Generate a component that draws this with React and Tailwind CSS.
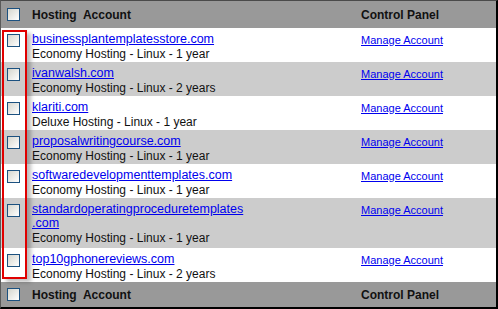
import React from 'react'

const accounts = [
  { domain: 'businessplantemplatesstore.com', plan: 'Economy Hosting - Linux - 1 year' },
  { domain: 'ivanwalsh.com', plan: 'Economy Hosting - Linux - 2 years' },
  { domain: 'klariti.com', plan: 'Deluxe Hosting - Linux - 1 year' },
  { domain: 'proposalwritingcourse.com', plan: 'Economy Hosting - Linux - 1 year' },
  { domain: 'softwaredevelopmenttemplates.com', plan: 'Economy Hosting - Linux - 1 year' },
  { domain: 'standardoperatingproceduretemplates', tail: '.com', plan: 'Economy Hosting - Linux - 1 year' },
  { domain: 'top10gphonereviews.com', plan: 'Economy Hosting - Linux - 2 years' },
]

function Box() {
  return (
    <span className="block w-[13px] h-[13px] border border-[#1c5180] bg-gradient-to-br from-[#d6d6ce] to-white" />
  )
}

function HeadRow({ height }) {
  return (
    <div className={`flex items-center bg-[#999999] ${height}`}>
      <div className="w-[31px] pl-[6px]">
        <Box />
      </div>
      <div className="w-[329px] font-bold text-[12px] text-[#111]">Hosting&nbsp; Account</div>
      <div className="font-bold text-[12px] text-[#111]">Control Panel</div>
    </div>
  )
}

export default function App() {
  return (
    <div
      className="relative w-[498px] h-[309px] bg-white border-t border-l border-t-[#4a4a4a] border-l-[#5a5a5a] border-r-2 border-b-2 border-r-black border-b-black"
      style={{ fontFamily: '"Liberation Sans", Arial, sans-serif' }}
    >
      <HeadRow height="h-[27px]" />

      {accounts.map((a, i) => (
        <div
          key={a.domain}
          className={`flex ${i % 2 ? 'bg-[#cccccc]' : 'bg-white'} ${a.tail ? 'h-[50px]' : 'h-[34px]'}`}
        >
          <div className="w-[31px] pl-[6px] pt-[6px]">
            <Box />
          </div>
          <div className="w-[329px] pt-[4px] leading-[14px]">
            <a href="#" className="block text-[12.5px] text-[#0000ee] underline">
              {a.domain}
              {a.tail && <><br />{a.tail}</>}
            </a>
            <div className="text-[12px] text-[#111] mt-[1px]">{a.plan}</div>
          </div>
          <div className="pt-[4px] leading-[14px]">
            <a href="#" className="text-[11px] text-[#0000ee] underline">Manage Account</a>
          </div>
        </div>
      ))}

      <HeadRow height="h-[25px]" />

      {/* red annotation round the row checkboxes */}
      <div className="absolute left-[1px] top-[29px] w-[25px] h-[249px] border-2 border-[#e00000] shadow-[4px_3px_4px_rgba(0,0,0,0.25)]" />
    </div>
  )
}
